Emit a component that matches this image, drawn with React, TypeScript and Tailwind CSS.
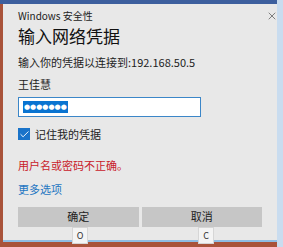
import { Check, X } from 'lucide-react'

function KeyTip({ k, left }: { k: string; left: string }) {
  return (
    <div
      className={`absolute top-[227px] ${left} w-[16px] h-[17px] bg-[#f4f4f4] border border-[#d6d6d6] flex items-center justify-center text-[9px] leading-none text-[#333]`}
    >
      {k}
    </div>
  )
}

export default function App() {
  return (
    <div
      className="w-[283px] h-[247px] overflow-hidden bg-[#a9533a] relative"
      style={{ fontFamily: '"Microsoft YaHei", "Noto Sans CJK SC", "Noto Sans", sans-serif' }}
    >
      <div className="h-[4px] bg-[#3d5f9e]" />
      <div className="absolute top-0 right-0 w-[6px] h-full bg-[#c9dcef]" />
      <div className="absolute left-[3px] top-[4px] w-[274px] h-[238px] bg-[#e8e8e8] border-b-2 border-[#8fbde3] px-[15px]">
        <div className="flex items-center justify-between h-[22px] pt-[2px]">
          <span className="text-[10px] leading-[14px] text-[#222]">Windows 安全性</span>
          <X size={12} strokeWidth={1.3} className="text-[#444] mr-[-16px]" />
        </div>
        <div className="text-[17px] leading-[22px] text-[#111] mt-[-1px]">输入网络凭据</div>
        <div className="text-[11px] leading-[14px] text-[#222] mt-[8px]">输入你的凭据以连接到:192.168.50.5</div>
        <div className="text-[11px] leading-[14px] text-[#222] mt-[8px]">王佳慧</div>
        <div className="mt-[6px] w-[183px] h-[20px] bg-white border border-[#3b86c8] flex items-center pl-[4px]">
          <span className="bg-[#0a74d1] text-white text-[7px] leading-[12px] px-[1px] font-['DejaVu_Sans']">●●●●●●●</span>
        </div>
        <div className="flex items-center gap-[5px] mt-[9px]">
          <div className="w-[12px] h-[12px] bg-[#1a73c9] flex items-center justify-center">
            <Check size={11} strokeWidth={2} className="text-white" />
          </div>
          <span className="text-[11px] text-[#222]">记住我的凭据</span>
        </div>
        <div className="text-[11px] leading-[14px] text-[#c8202a] mt-[15px]">用户名或密码不正确。</div>
        <div className="text-[11px] leading-[14px] text-[#1f76c2] mt-[10px]">更多选项</div>
        <div className="flex gap-[3px] mt-[11px]">
          <button className="w-[124px] h-[20px] bg-[#c6c6c6] text-[11px] text-[#222]">确定</button>
          <button className="w-[124px] h-[20px] bg-[#c6c6c6] text-[11px] text-[#222]">取消</button>
        </div>
      </div>
      <KeyTip k="O" left="left-[72px]" />
      <KeyTip k="C" left="left-[198px]" />
    </div>
  )
}
